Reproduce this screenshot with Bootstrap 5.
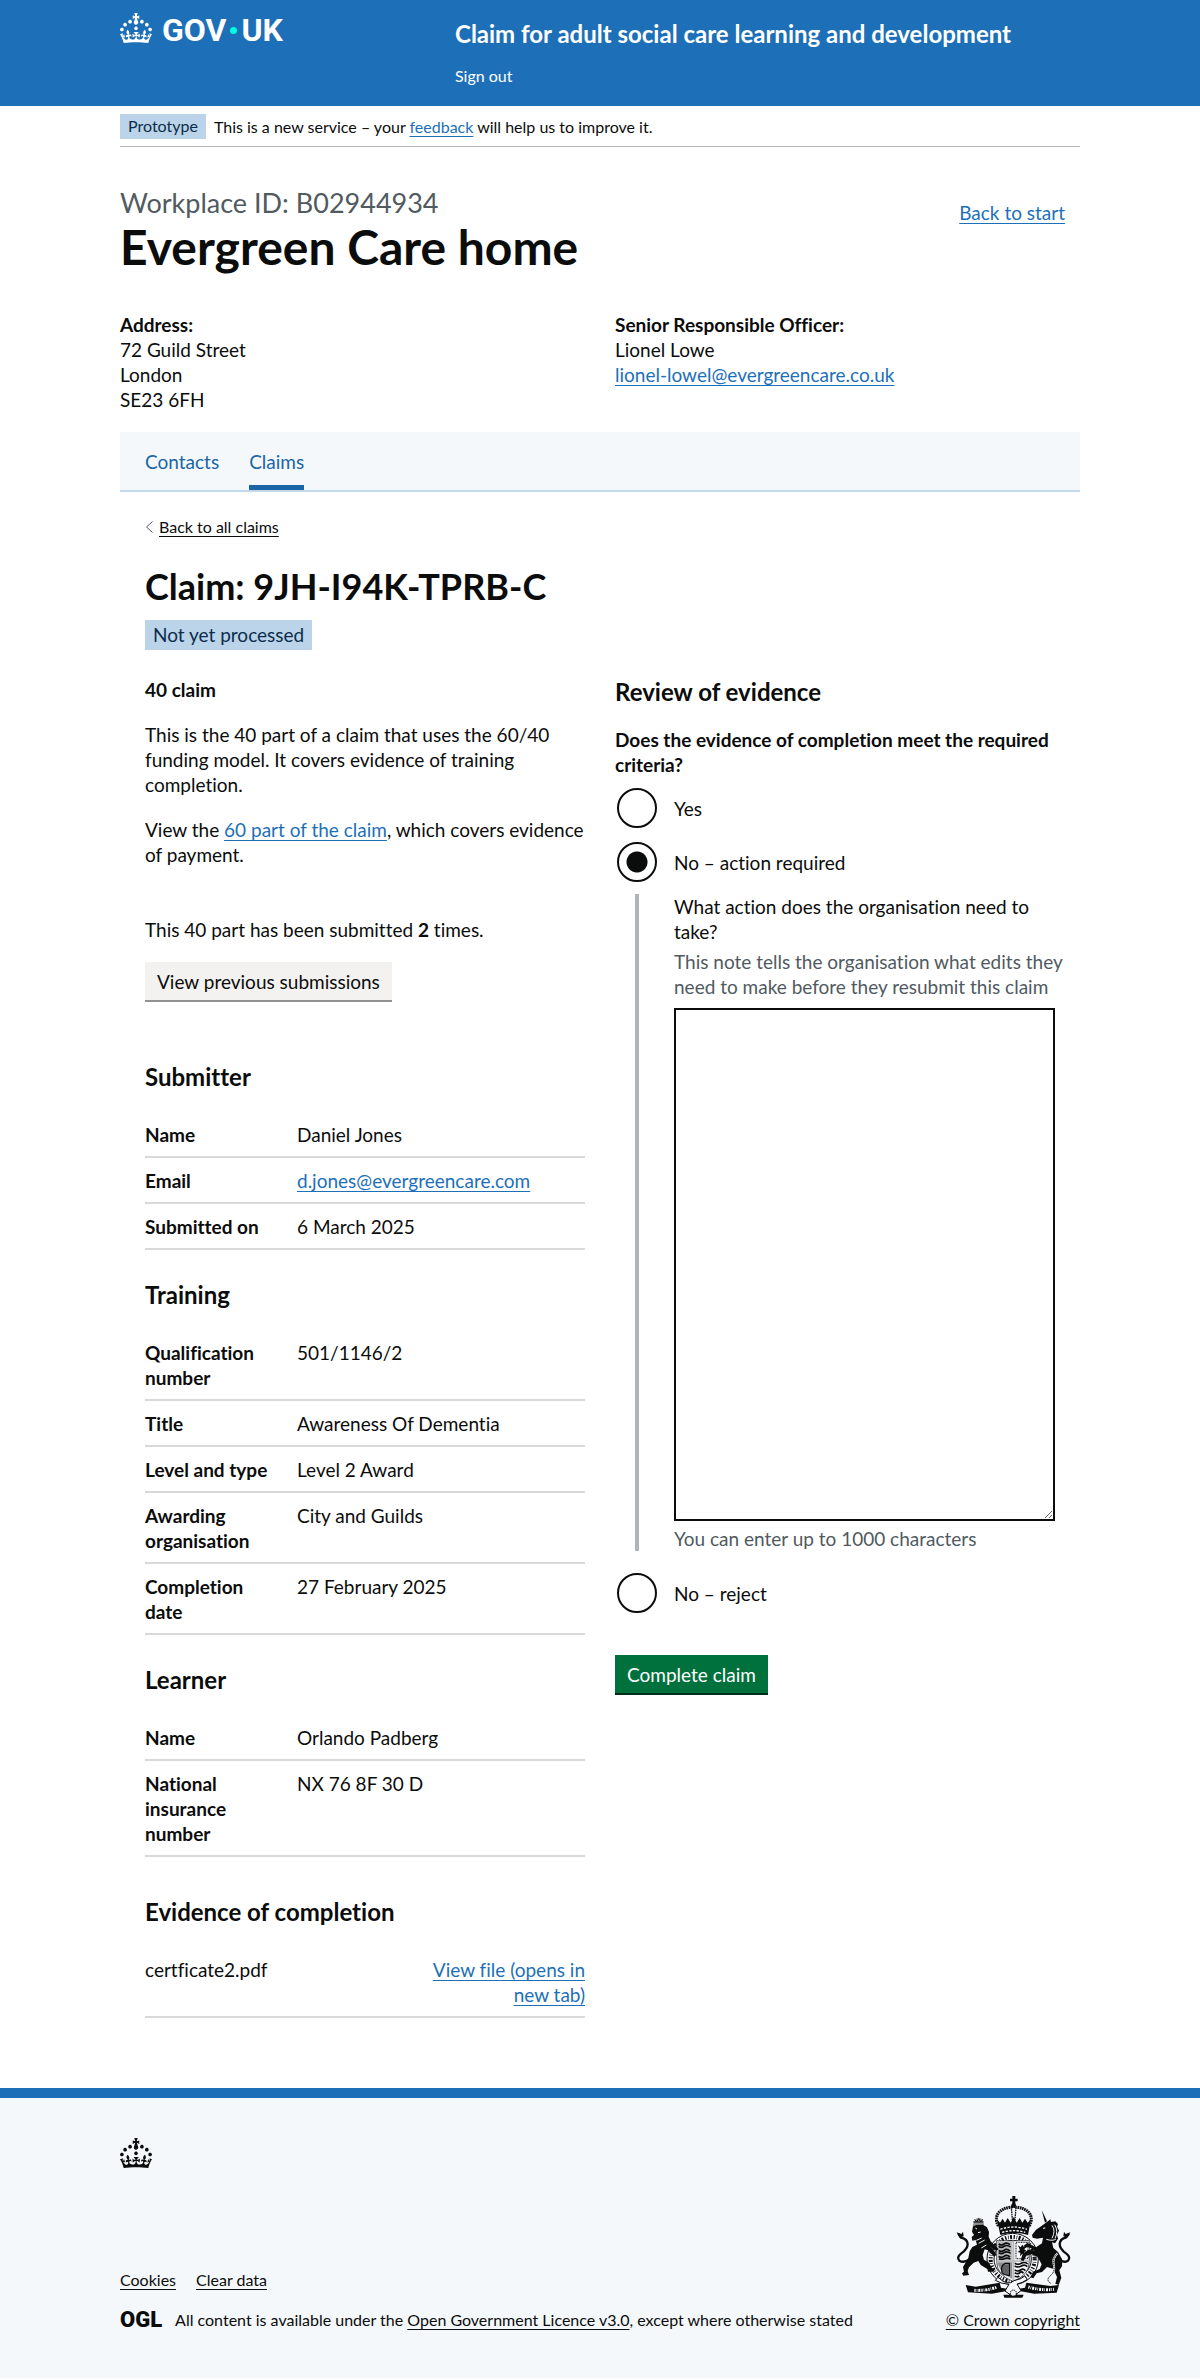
<!DOCTYPE html>
<html lang="en">
<head>
<meta charset="utf-8">
<meta name="viewport" content="width=device-width, initial-scale=1">
<title>Claim: 9JH-I94K-TPRB-C – Claim for adult social care learning and development</title>
<link href="https://cdn.jsdelivr.net/npm/bootstrap@5.3.0/dist/css/bootstrap.min.css" rel="stylesheet">
<style>
  :root { --ink: #0b0c0c; --brand: #1d70b8; --muted: #505a5f; --line: #d8d9da; --tint: #f4f8fb; }
  body { font-family: Lato, "Liberation Sans", sans-serif; font-size: 19px; line-height: 25px; color: var(--ink); font-variant-ligatures: none; }
  a { color: var(--brand); text-decoration-thickness: 1px; text-underline-offset: 3px; }
  .page-width { max-width: 990px; padding: 0 15px; margin: 0 auto; }
  .text-16 { font-size: 16px; line-height: 20px; }
  .ink-link { color: var(--ink); }
  .title-xl { font-size: 48px; line-height: 50px; font-weight: 700; margin: 4px 0 0; }
  .title-l { font-size: 36px; line-height: 40px; font-weight: 700; }
  .title-m { font-size: 24px; line-height: 30px; font-weight: 700; margin: 0 0 20px; }
  .title-s { font-size: 19px; line-height: 25px; font-weight: 700; margin: 0 0 20px; }
  .caption-l { font-size: 27px; line-height: 30px; color: var(--muted); }
  .gutter-30 { --bs-gutter-x: 30px; }

  /* header */
  .site-header { background: var(--brand); color: #fff; padding-bottom: 20px; }
  .site-header a { color: #fff; text-decoration: none; }
  .logo-col { flex: 0 0 335px; padding-top: 13px; gap: 10px; }
  .wordmark { font: 700 32px/34px Roboto, sans-serif; }
  .wordmark-dot { width: 7px; height: 7px; background: #00ffe0; border-radius: 50%; }
  .header-text { padding-top: 19px; }
  .header-text .title-m { margin-bottom: 17px; }

  .status-tag { display: inline-block; background: #bbd4ea; color: #0c2d4a; padding: 2px 8px 3px; }
  .phase { border-bottom: 1px solid #b1b4b6; padding: 8px 0 7px; }

  /* organisation */
  .masthead { padding-top: 41px; }
  .back-start { margin: 12px 15px 0 0; }
  .org-details { margin-top: 40px; margin-bottom: 20px; }
  .subnav { background: var(--tint); border-bottom: 2px solid #c3d8ea; padding: 0 25px; gap: 30px; }
  .subnav a { display: block; color: #1a65a6; text-decoration: none; padding: 17px 0 16px; }
  .subnav a.current { box-shadow: inset 0 -5px #1a65a6; }

  /* claim */
  .claim-panel { padding: 25px 25px 70px; }
  .back-all { gap: 6px; }
  .claim-title { margin: 29px 0 14px; }
  .claim-status { margin-bottom: 27px; }
  .para { margin: 0 0 20px; }
  .para-last { margin-bottom: 50px; }
  .first-section { margin-top: 62px; }

  .action { border: 0; border-radius: 0; padding: 7px 12px 6px; line-height: 25px; font-size: 19px; }
  .action-plain { background: #f3f2f1; color: var(--ink); box-shadow: 0 2px 0 #929191; }
  .action-go { background: #00703c; color: #fff; box-shadow: 0 2px 0 #002d18; margin-top: 30px; }

  .facts { margin: 0 0 30px; }
  .facts-last { margin-bottom: 40px; }
  .facts > div { display: flex; padding: 10px 0 9px; border-bottom: 2px solid var(--line); }
  .facts dt { flex: 0 0 152px; padding-right: 20px; }
  .facts dd { margin: 0; }
  .file-row { padding: 10px 0 9px; border-bottom: 2px solid var(--line); }
  .file-row a { flex: 0 0 168px; }

  /* review form */
  .question { float: none; font-size: 19px; line-height: 25px; margin: 0 0 9px; }
  .choice { display: flex; align-items: center; gap: 15px; min-height: 44px; margin-bottom: 10px; }
  .choice input { appearance: none; flex: none; width: 40px; height: 40px; margin: 0 2px; border: 2px solid var(--ink); border-radius: 50%; background: #fff; }
  .choice input:checked { background: radial-gradient(circle, var(--ink) 10px, transparent 11px); }
  .follow-up { border-left: 4px solid #b1b4b6; margin: 0 0 20px 20px; padding-left: 35px; }
  .hint { color: var(--muted); }
  .note-hint { margin: 5px -15px 0 0; }
  .note-box { display: block; width: 100%; height: 513px; margin: 9px 0 5px; padding: 5px; border: 2px solid var(--ink); }

  /* footer */
  .site-footer { background: var(--tint); border-top: 10px solid var(--brand); padding: 40px 0 48px; }
  .footer-row { margin-top: 28px; }
  .footer-links { gap: 20px; margin-bottom: 20px; }
  .licence { gap: 13px; }
  .ogl { font: 900 22px/20px Roboto, sans-serif; }
  .arms { margin-bottom: 12px; }
</style>
</head>
<body>
<svg class="d-none" aria-hidden="true">
  <symbol id="crown" viewBox="0 0 32 30"><path d="M22.6 10.4c-1 .4-2-.1-2.4-1-.4-.9.1-2 1-2.4.9-.4 2 .1 2.4 1s-.1 2-1 2.4m-5.9 6.7c-.9.4-2-.1-2.4-1-.4-.9.1-2 1-2.4.9-.4 2 .1 2.4 1s-.1 2-1 2.4m10.8-3.7c-1 .4-2-.1-2.4-1-.4-.9.1-2 1-2.4.9-.4 2 .1 2.4 1s0 2-1 2.4m3.3 4.8c-1 .4-2-.1-2.4-1-.4-.9.1-2 1-2.4.9-.4 2 .1 2.4 1s-.1 2-1 2.4M17 4.7l2.3 1.2V2.5l-2.3.7-.2-.2.9-3h-3.4l.9 3-.2.2c-.1.1-2.3-.7-2.3-.7v3.4L15 4.7c.1.1.1.2.2.2l-1.3 4c-.1.2-.1.4-.1.6 0 1.1.8 2 1.9 2.2h.7c1-.2 1.9-1.1 1.9-2.1 0-.2 0-.4-.1-.6l-1.3-4c-.1-.2 0-.2.1-.3m-7.6 5.7c.9.4 2-.1 2.4-1 .4-.9-.1-2-1-2.4-.9-.4-2 .1-2.4 1s0 2 1 2.4m-5 3c.9.4 2-.1 2.4-1 .4-.9-.1-2-1-2.4-.9-.4-2 .1-2.4 1s.1 2 1 2.4m-3.2 4.8c.9.4 2-.1 2.4-1 .4-.9-.1-2-1-2.4-.9-.4-2 .1-2.4 1s0 2 1 2.4m14.8 11c4.4 0 8.6.3 12.3.8 1.1-4.5 2.4-7 3.7-8.8l-2.5-.9c.2 1.3.3 1.9 0 2.7-.4-.4-.8-1.1-1.1-2.3l-1.2 4c.7-.5 1.3-.8 2-.9-1.1 2.5-2.6 3.1-3.5 3-1.1-.2-1.7-1.2-1.5-2.1.3-1.2 1.5-1.5 2.1-.1 1.1-2.3-.8-3-2-2.3 1.9-1.9 2.1-3.5.6-5.6-2.1 1.6-2.1 3.2-1.2 5.5-1.2-1.4-3.2-.6-2.5 1.6.9-1.4 2.1-.5 1.9.8-.2 1.1-1.7 2.1-3.5 1.9-2.7-.2-2.9-2.1-2.9-3.6.7-.1 1.9.5 2.9 1.9l.4-4.3c-1.1 1.1-2.1 1.4-3.2 1.4.4-1.2 2.1-3 2.1-3h-5.4s1.7 1.9 2.1 3c-1.1 0-2.1-.2-3.2-1.4l.4 4.3c1-1.4 2.2-2 2.9-1.9-.1 1.5-.2 3.4-2.9 3.6-1.9.2-3.4-.8-3.5-1.9-.2-1.3 1-2.2 1.9-.8.7-2.3-1.2-3-2.5-1.6.9-2.2.9-3.9-1.2-5.5-1.5 2-1.3 3.7.6 5.6-1.2-.7-3.1 0-2 2.3.6-1.4 1.8-1.1 2.1.1.2.9-.3 1.9-1.5 2.1-.9.2-2.4-.5-3.5-3 .6 0 1.2.3 2 .9l-1.2-4c-.3 1.1-.7 1.9-1.1 2.3-.3-.8-.2-1.4 0-2.7l-2.9.9C1.3 23 2.6 25.5 3.7 30c3.7-.5 7.9-.8 12.3-.8"/></symbol>
</svg>

<header class="site-header">
  <div class="page-width d-flex flex-wrap">
    <a href="#" class="logo-col d-flex align-items-start" aria-label="GOV.UK">
      <svg width="32" height="30" fill="currentColor" aria-hidden="true"><use href="#crown"/></svg>
      <span class="wordmark d-flex align-items-center"><span>GOV</span><span class="wordmark-dot mx-1"></span><span>UK</span></span>
    </a>
    <div class="header-text">
      <a href="#" class="title-m d-block">Claim for adult social care learning and development</a>
      <nav><a href="#" class="text-16 d-block">Sign out</a></nav>
    </div>
  </div>
</header>

<div class="page-width">
  <div class="phase text-16 d-flex align-items-center">
    <span class="status-tag">Prototype</span>
    <span class="ms-2">This is a new service – your <a href="#">feedback</a> will help us to improve it.</span>
  </div>

  <main>
    <div class="masthead d-flex justify-content-between">
      <div>
        <div class="caption-l">Workplace ID: B02944934</div>
        <h1 class="title-xl">Evergreen Care home</h1>
      </div>
      <a href="#" class="back-start">Back to start</a>
    </div>

    <div class="row gutter-30 org-details">
      <div class="col-6"><strong>Address:</strong><br>72 Guild Street<br>London<br>SE23 6FH</div>
      <div class="col-6"><strong>Senior Responsible Officer:</strong><br>Lionel Lowe<br><a href="#">lionel-lowel@evergreencare.co.uk</a></div>
    </div>

    <nav class="subnav d-flex" aria-label="Organisation">
      <a href="#">Contacts</a>
      <a href="#" class="current" aria-current="page">Claims</a>
    </nav>

    <div class="claim-panel">
      <div class="text-16 d-flex align-items-center back-all">
        <svg width="8" height="12" viewBox="0 0 8 12" fill="none" stroke="#505a5f" aria-hidden="true"><path d="M7.500 .5 1.500 6l6 5.500"/></svg>
        <a href="#" class="ink-link">Back to all claims</a>
      </div>
      <h2 class="title-l claim-title">Claim: 9JH-I94K-TPRB-C</h2>
      <div class="claim-status"><span class="status-tag">Not yet processed</span></div>

      <div class="row gutter-30">
        <div class="col-md-6">
          <h3 class="title-s">40 claim</h3>
          <p class="para">This is the 40 part of a claim that uses the 60/40 funding model. It covers evidence of training completion.</p>
          <p class="para para-last">View the <a href="#">60 part of the claim</a>, which covers evidence of payment.</p>
          <p class="para">This 40 part has been submitted <strong>2</strong> times.</p>
          <button type="button" class="btn action action-plain">View previous submissions</button>

          <h3 class="title-m first-section">Submitter</h3>
          <dl class="facts">
            <div><dt>Name</dt><dd>Daniel Jones</dd></div>
            <div><dt>Email</dt><dd><a href="#">d.jones@evergreencare.com</a></dd></div>
            <div><dt>Submitted on</dt><dd>6 March 2025</dd></div>
          </dl>

          <h3 class="title-m">Training</h3>
          <dl class="facts">
            <div><dt>Qualification number</dt><dd>501/1146/2</dd></div>
            <div><dt>Title</dt><dd>Awareness Of Dementia</dd></div>
            <div><dt>Level and type</dt><dd>Level 2 Award</dd></div>
            <div><dt>Awarding organisation</dt><dd>City and Guilds</dd></div>
            <div><dt>Completion date</dt><dd>27 February 2025</dd></div>
          </dl>

          <h3 class="title-m">Learner</h3>
          <dl class="facts facts-last">
            <div><dt>Name</dt><dd>Orlando Padberg</dd></div>
            <div><dt>National insurance number</dt><dd>NX 76 8F 30 D</dd></div>
          </dl>

          <h3 class="title-m">Evidence of completion</h3>
          <div class="file-row d-flex justify-content-between">
            <span>certficate2.pdf</span>
            <a href="#" class="text-end">View file (opens in new tab)</a>
          </div>
        </div>

        <div class="col-md-6">
          <h3 class="title-m">Review of evidence</h3>
          <form>
            <fieldset>
              <legend class="question fw-bold">Does the evidence of completion meet the required criteria?</legend>
              <div class="choice"><input type="radio" name="outcome" id="yes"><label for="yes">Yes</label></div>
              <div class="choice"><input type="radio" name="outcome" id="action" checked><label for="action">No – action required</label></div>
              <div class="follow-up">
                <label for="note" class="d-block">What action does the organisation need to take?</label>
                <div class="hint note-hint" id="note-hint">This note tells the organisation what edits they need to make before they resubmit this claim</div>
                <textarea class="note-box" id="note" aria-describedby="note-hint"></textarea>
                <div class="hint">You can enter up to 1000 characters</div>
              </div>
              <div class="choice"><input type="radio" name="outcome" id="reject"><label for="reject">No – reject</label></div>
            </fieldset>
            <button type="submit" class="btn action action-go">Complete claim</button>
          </form>
        </div>
      </div>
    </div>
  </main>
</div>

<footer class="site-footer text-16">
  <div class="page-width">
    <svg class="d-block" width="32" height="30" fill="#0b0c0c" aria-hidden="true"><use href="#crown"/></svg>
    <div class="d-flex justify-content-between align-items-end footer-row">
      <div>
        <div class="d-flex footer-links"><a href="#" class="ink-link">Cookies</a><a href="#" class="ink-link">Clear data</a></div>
        <div class="d-flex align-items-center licence">
          <span class="ogl">OGL</span>
          <span>All content is available under the <a href="#" class="ink-link">Open Government Licence v3.0</a>, except where otherwise stated</span>
        </div>
      </div>
      <div class="text-center">
        <svg class="arms d-block mx-auto" width="116" height="102" viewBox="81 50 348 306" fill="#0b0c0c" aria-hidden="true">
          <!-- royal crown -->
          <path d="M253 50h9v8h7v8h-7v8h-9v-8h-7v-8h7z"/>
          <circle cx="257" cy="78" r="7"/>
          <path d="M211 140c-16-30 2-54 42-57M304 140c16-30-2-54-42-57" fill="none" stroke="#0b0c0c" stroke-width="9" stroke-dasharray="5 2"/>
          <path d="M250 84h14l-3 36h-8z" fill="none" stroke="#0b0c0c" stroke-width="4" stroke-dasharray="5 2"/>
          <path d="M207 120l9 10 8-12 7 12 8-14 9 14 9-17 9 17 9-14 8 14 8-12 8 12 10-10-9 47q-43-12-83 0z"/>
          <path d="M217 150q40-14 80 0M222 159q35-10 70 0" fill="none" stroke="#f4f8fb" stroke-width="4" stroke-dasharray="7 4"/>
          <!-- garter -->
          <circle cx="254" cy="239" r="77" fill="#f4f8fb" stroke="#0b0c0c" stroke-width="3"/>
          <circle cx="254" cy="239" r="66" fill="none" stroke="#0b0c0c" stroke-width="12" stroke-dasharray="4 5 2 4 6 5"/>
          <circle cx="254" cy="239" r="56" fill="#f4f8fb" stroke="#0b0c0c" stroke-width="3"/>
          <!-- quartered shield -->
          <path d="M206 184h98v62q0 42-49 60-49-18-49-60z" fill="#f4f8fb" stroke="#0b0c0c" stroke-width="2"/>
          <path d="M208 186h44v57h-44z" fill="#b8babb"/>
          <path d="M212 194q8 6 16 0t18 2M212 201q8 6 16 0t20 2M212 213q8 6 16 0t18 2M212 220q8 6 16 0t20 2M212 231q8 6 16 0t18 2M213 238q8 4 16 0t18 1" fill="none" stroke="#0b0c0c" stroke-width="5"/>
          <path d="M264 189h36v49h-36z" fill="none" stroke="#0b0c0c" stroke-width="3" stroke-dasharray="3 2"/>
          <path d="M270 198l8 6 5-8 5 7 7-2-6 9 7 6-8 2 4 10-9-5-7 8 1-11-8-2 7-5z"/>
          <path d="M209 249h43v49q-32-14-43-45z" fill="#8e9091"/>
          <path d="M232 252q-16 6-10 28 10 10 22 8V252z" fill="none" stroke="#0b0c0c" stroke-width="4"/>
          <path d="M225 258v24M231 256v30M237 256v30" stroke="#0b0c0c" stroke-width="2"/>
          <path d="M260 252q10 6 20 0t19 2M260 260q10 6 20 0t18 2M260 272q10 6 18 0t14 2M260 280q10 6 16 0t10 2M260 291q8 3 14-1" fill="none" stroke="#0b0c0c" stroke-width="5"/>
          <path d="M253 184h6v120h-6zM206 243h98v5h-98z" fill="#b8babb"/>
          <!-- lion supporter -->
          <path d="M134 140l4-14 6-8 8-3 9 3 5 8 2 11z" fill="#8e9091"/>
          <path d="M136 128h30M140 120l6 8 6-10 6 10 6-8" fill="none" stroke="#0b0c0c" stroke-width="3"/>
          <path d="M135 141l10-4 20-1 12 8 6 14-1 14 6 14 14 13 10 10-7 5-18-10 12 12 7 12-9 3-17-18-10-3-6 17 4 14 15 9 9 16 8 5-3 6h-17l-2-8-20-12-7-12-14 5-14 14-4 11 4 12-17 2-4-7 6-5-3-14 16-27 4-20 8-13 14-7-4-14-10 2-2-11 7-6-6-10z"/>
          <path d="M142 146l5 3M150 160l8-2M145 183l16-7M152 192l18-10M160 206l15-9" stroke="#f4f8fb" stroke-width="3"/>
          <path d="M124 240q-16 12-30 4-9-10 5-21 20-14 20-29-1-15-20-19l-8-12" fill="none" stroke="#0b0c0c" stroke-width="7"/>
          <path d="M86 159l14 5 5-7 2 14-12 4z"/>
          <!-- unicorn supporter -->
          <path d="M341 92l16 34-6 4z"/>
          <path d="M357 128l10-8 2 8 13-2 8 8-3 8 6 12-6 12 3 12-9 14-9-3 4 17 14 12 13 23-1 20-8 12 6 22-8 22-10-4 5-20-12-25-18-5-15 15-16 4-10 15-9-3 8-17 20-8 6-14-12-22-20-9-14 5-8 16-9-2 6-20 16-11 20 1-20-11-8 4-5-7 11-8 26 13 18-12 3-17-18 3-13-3-2-8 12-16 12-8z"/>
          <path d="M372 138q12 16 0 39M380 136q12 20 1 41M355 180q20 6 29-1M345 147l7-1" fill="none" stroke="#f4f8fb" stroke-width="3"/>
          <path d="M389 222q-18 15-11 38 4 18-13 31-12 13 4 21" fill="none" stroke="#f4f8fb" stroke-width="6"/>
          <path d="M389 222q-18 15-11 38 4 18-13 31-12 13 4 21" fill="none" stroke="#0b0c0c" stroke-width="3" stroke-dasharray="4 2"/>
          <path d="M392 240q14 12 28 4 9-10-5-21-20-14-20-29 1-15 18-19l10-12" fill="none" stroke="#0b0c0c" stroke-width="7"/>
          <path d="M427 159l-14 5-5-7-2 14 12 4z"/>
          <!-- motto ribbon and compartment -->
          <path d="M113 317l30 5 72-12 4 15 36 6 36-6 4-15 72 10 26-3-7 23-67 3-45-8-19 8-19-8-44 8-72-4z"/>
          <path d="M139 333q35 2 69-10M301 323q36 11 77 7" fill="none" stroke="#f4f8fb" stroke-width="9" stroke-dasharray="4 3 2 3 6 3"/>
          <path d="M210 294q30 28 48 10 24-5 32-14l8 10q-14 11-31 14l12 20-24 18-24-17 12-20q-26-2-41-12z" fill="#f4f8fb" stroke="#0b0c0c" stroke-width="3"/>
          <path d="M226 346h17l13-11 13 11h18l-4 9h-54z"/>
          <circle cx="256" cy="341" r="9" fill="#f4f8fb" stroke="#0b0c0c" stroke-width="3" stroke-dasharray="4 2"/>
        </svg>
        <a href="#" class="ink-link d-block">© Crown copyright</a>
      </div>
    </div>
  </div>
</footer>
<script src="https://cdn.jsdelivr.net/npm/bootstrap@5.3.0/dist/js/bootstrap.bundle.min.js"></script>
</body>
</html>
